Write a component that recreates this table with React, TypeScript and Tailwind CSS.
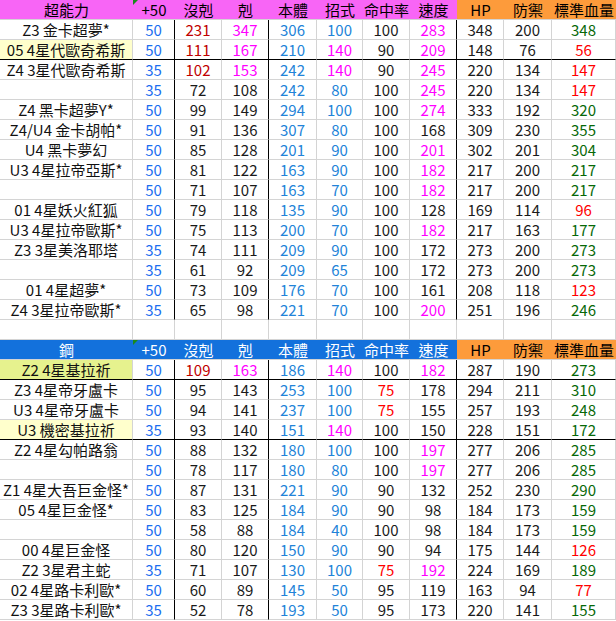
import React from "react";

type C = "B" | "R" | "M" | "L" | "K" | "r" | "G";
type Row = { name: string; hl?: "y" | "g"; vals: [string, C][]; thick?: boolean };

const colorCls: Record<C, string> = {
  B: "text-[#1b6ef0]",
  R: "text-[#c00000]",
  M: "text-[#ff00ff]",
  L: "text-[#2283d8]",
  K: "text-[#1a1a1a]",
  r: "text-[#ff0000]",
  G: "text-[#076807]",
};

function mk(
  name: string,
  a: string,
  b: string,
  bc: C,
  c: string,
  cc: C,
  d: string,
  e: string,
  ec: C,
  f: string,
  fc: C,
  g: string,
  gc: C,
  h: string,
  i: string,
  j: string,
  jc: C,
  opts: { hl?: "y" | "g"; thick?: boolean } = {}
): Row {
  return {
    name,
    ...opts,
    vals: [
      [a, "B"],
      [b, bc],
      [c, cc],
      [d, "L"],
      [e, ec],
      [f, fc],
      [g, gc],
      [h, "K"],
      [i, "K"],
      [j, jc],
    ],
  };
}

const sec1: Row[] = [
  mk("Z3 金卡超夢*", "50", "231", "R", "347", "M", "306", "100", "L", "100", "K", "283", "M", "348", "200", "348", "G"),
  mk("05 4星代歐奇希斯", "50", "111", "R", "167", "M", "210", "140", "M", "90", "K", "209", "M", "148", "76", "56", "r", { hl: "y", thick: true }),
  mk("Z4 3星代歐奇希斯", "35", "102", "R", "153", "M", "242", "140", "M", "90", "K", "245", "M", "220", "134", "147", "r"),
  mk("", "35", "72", "K", "108", "K", "242", "80", "L", "100", "K", "245", "M", "220", "134", "147", "r"),
  mk("Z4 黑卡超夢Y*", "50", "99", "K", "149", "K", "294", "100", "L", "100", "K", "274", "M", "333", "192", "320", "G"),
  mk("Z4/U4 金卡胡帕*", "50", "91", "K", "136", "K", "307", "80", "L", "100", "K", "168", "K", "309", "230", "355", "G"),
  mk("U4 黑卡夢幻", "50", "85", "K", "128", "K", "201", "90", "L", "100", "K", "201", "M", "302", "201", "304", "G"),
  mk("U3 4星拉帝亞斯*", "50", "81", "K", "122", "K", "163", "90", "L", "100", "K", "182", "M", "217", "200", "217", "G"),
  mk("", "50", "71", "K", "107", "K", "163", "70", "L", "100", "K", "182", "M", "217", "200", "217", "G"),
  mk("01 4星妖火紅狐", "50", "79", "K", "118", "K", "135", "90", "L", "100", "K", "128", "K", "169", "114", "96", "r"),
  mk("U3 4星拉帝歐斯*", "50", "75", "K", "113", "K", "200", "70", "L", "100", "K", "182", "M", "217", "163", "177", "G"),
  mk("Z3 3星美洛耶塔", "35", "74", "K", "111", "K", "209", "90", "L", "100", "K", "172", "K", "273", "200", "273", "G"),
  mk("", "35", "61", "K", "92", "K", "209", "65", "L", "100", "K", "172", "K", "273", "200", "273", "G"),
  mk("01 4星超夢*", "50", "73", "K", "109", "K", "176", "70", "L", "100", "K", "161", "K", "208", "118", "123", "r"),
  mk("Z4 3星拉帝歐斯*", "35", "65", "K", "98", "K", "221", "70", "L", "100", "K", "200", "M", "251", "196", "246", "G"),
];

const sec2: Row[] = [
  mk("Z2 4星基拉祈", "50", "109", "R", "163", "M", "186", "140", "M", "100", "K", "182", "M", "287", "190", "273", "G", { hl: "g", thick: true }),
  mk("Z3 4星帝牙盧卡", "50", "95", "K", "143", "K", "253", "100", "L", "75", "r", "178", "K", "294", "211", "310", "G"),
  mk("U3 4星帝牙盧卡", "50", "94", "K", "141", "K", "237", "100", "L", "75", "r", "155", "K", "257", "193", "248", "G"),
  mk("U3 機密基拉祈", "35", "93", "K", "140", "K", "151", "140", "M", "100", "K", "150", "K", "228", "151", "172", "G", { hl: "y", thick: true }),
  mk("Z2 4星勾帕路翁", "50", "88", "K", "132", "K", "180", "100", "L", "100", "K", "197", "M", "277", "206", "285", "G"),
  mk("", "50", "78", "K", "117", "K", "180", "80", "L", "100", "K", "197", "M", "277", "206", "285", "G"),
  mk("Z1 4星大吾巨金怪*", "50", "87", "K", "131", "K", "221", "90", "L", "90", "K", "132", "K", "252", "230", "290", "G"),
  mk("05 4星巨金怪*", "50", "83", "K", "125", "K", "184", "90", "L", "90", "K", "98", "K", "184", "173", "159", "G"),
  mk("", "50", "58", "K", "88", "K", "184", "40", "L", "100", "K", "98", "K", "184", "173", "159", "G"),
  mk("00 4星巨金怪", "50", "80", "K", "120", "K", "150", "90", "L", "90", "K", "94", "K", "175", "144", "126", "r"),
  mk("Z2 3星君主蛇", "35", "71", "K", "107", "K", "130", "100", "L", "75", "r", "192", "M", "224", "169", "189", "G"),
  mk("02 4星路卡利歐*", "50", "60", "K", "89", "K", "145", "50", "L", "95", "K", "119", "K", "163", "94", "77", "r"),
  mk("Z3 3星路卡利歐*", "35", "52", "K", "78", "K", "193", "50", "L", "95", "K", "173", "K", "220", "141", "155", "G"),
];

const heads = ["+50", "沒剋", "剋", "本體", "招式", "命中率", "速度", "HP", "防禦", "標準血量"];

const grid =
  "grid grid-cols-[133px_42px_47px_47px_48px_46px_47px_47px_47px_48px_64px]";

function Header({ title, blue }: { title: string; blue?: boolean }) {
  const left = blue ? "bg-[#1371dc] text-white" : "bg-[#f865f6] text-black";
  return (
    <div className={grid}>
      <div className={`h-[20px] flex items-center justify-center border-b border-[#d4d4d4] ${left}`}>{title}</div>
      {heads.map((h, i) => (
        <div
          key={h}
          className={`relative h-[20px] flex items-center justify-center border-b border-[#d4d4d4] ${
            i >= 7 ? "bg-[#fd9b3b] text-black" : left
          }`}
        >
          {i === 0 && (
            <span className="absolute left-0 top-0 w-0 h-0 border-t-[5px] border-r-[5px] border-t-[#1c8a1c] border-r-transparent" />
          )}
          {h}
        </div>
      ))}
    </div>
  );
}

function DataRow({ row }: { row: Row }) {
  const bb = row.thick ? "border-b-black" : "border-b-[#d4d4d4]";
  const nameBg = row.hl === "y" ? "bg-[#ffffcc]" : row.hl === "g" ? "bg-[#e6f28e]" : "bg-white";
  return (
    <div className={grid}>
      <div className={`h-[20px] flex items-center justify-center border-b border-r border-r-[#d4d4d4] ${bb} ${nameBg} text-[#111] whitespace-nowrap`}>
        {row.name}
      </div>
      {row.vals.map(([v, c], i) => (
        <div
          key={i}
          className={`h-[20px] flex items-center justify-center border-b border-r ${bb} ${
            i === 0 || i === 2 || i === 6 ? "border-r-black" : "border-r-[#d4d4d4]"
          } ${colorCls[c]}`}
        >
          {v}
        </div>
      ))}
    </div>
  );
}

function BlankRow() {
  return (
    <div className={grid}>
      {Array.from({ length: 11 }).map((_, i) => (
        <div key={i} className="h-[20px] border-b border-r border-[#d4d4d4]" />
      ))}
    </div>
  );
}

export default function App() {
  return (
    <div
      className="w-[616px] h-[621px] overflow-hidden bg-white text-[15px] leading-none"
      style={{ fontFamily: '"Noto Sans CJK TC", "Noto Sans", sans-serif' }}
    >
      <Header title="超能力" />
      {sec1.map((r, i) => (
        <DataRow key={i} row={r} />
      ))}
      <BlankRow />
      <Header title="鋼" blue />
      {sec2.map((r, i) => (
        <DataRow key={i} row={r} />
      ))}
    </div>
  );
}
